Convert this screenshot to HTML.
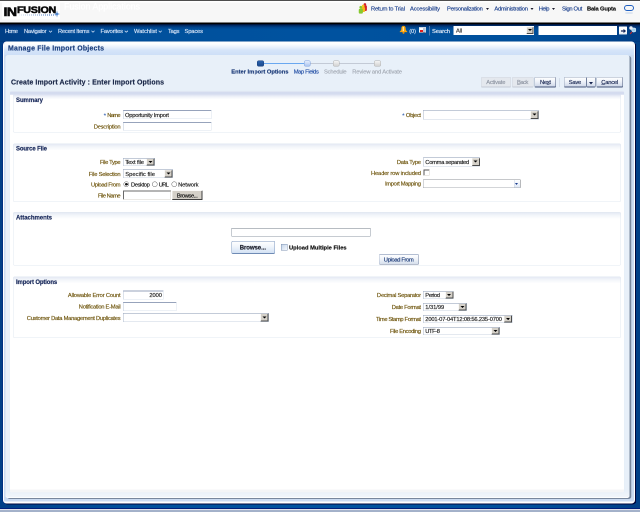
<!DOCTYPE html>
<html><head><meta charset="utf-8"><title>Manage File Import Objects</title>
<style>
html,body{margin:0;padding:0;width:640px;height:512px;overflow:hidden;background:#013e88;}
#root{will-change:transform;position:absolute;left:0;top:0;width:1280px;height:1024px;transform:scale(.5);transform-origin:0 0;background:linear-gradient(90deg,#003f87 0,#003f87 16px,#004893 110px,#00509c 260px,#00529f 640px,#00509c 1040px,#004893 1180px,#003f87 1264px,#003f87 1280px);overflow:hidden;font-family:"Liberation Sans",sans-serif;font-size:11px;color:#1c1c1c;}
#root *{box-sizing:border-box;}
.a{position:absolute;white-space:nowrap;}
.t{position:absolute;white-space:nowrap;line-height:16px;height:16px;-webkit-text-stroke-width:.32px;}
.in{position:absolute;background:#fff;border:1px solid #dbe3ec;border-top:2px solid #97a3bb;border-left-color:#b9c4d6;}
.sel{position:absolute;background:#fff;border:1px solid #c9d3e0;border-top:1px solid #8796b0;border-left-color:#a9b5c9;}
.dd{position:absolute;background:#d4d0c8;border:1px solid #f4f2ee;border-right:2px solid #4a4a4a;border-bottom:2px solid #4a4a4a;}
.dd:after{content:"";position:absolute;left:50%;top:50%;margin:-2px 0 0 -4px;border:4px solid transparent;border-top:4px solid #000;border-bottom:0;}
.btn{position:absolute;border:1px solid #9aa7bd;border-right-color:#46557a;border-bottom:2px solid #46557a;border-radius:2px;background:linear-gradient(#ffffff,#eef2f9 45%,#cfd8e8);}
.btn.dis{border:1px solid #d0d6df;border-bottom:2px solid #c3cad5;background:#e4e8ee;}
.radio{position:absolute;width:11px;height:11px;border-radius:50%;background:#fff;border:1.500px solid #555;}
.sec{position:absolute;border:1px solid #e1e8f0;border-radius:3px;background:linear-gradient(#e4e9f4 0,#f3f6fa 6px,#fff 13px);}
</style></head><body>
<div id="root">
<div class="a" style="left:0.00px;top:0.00px;width:1280.00px;height:2.00px;background:#4d4d4d;"></div>
<div class="a" style="left:0.00px;top:2.00px;width:1280.00px;height:43.60px;background:linear-gradient(#fff 0,#fff 2.500px,#f7f7f7 3px);"></div>
<div class="a" style="left:4.00px;top:4.00px;width:116.00px;height:35.00px;background:#fff;"></div>
<div class="a" style="left:0.00px;top:45.40px;width:1280.00px;height:2.60px;background:#000;"></div>
<div class="a" style="left:0.00px;top:47.80px;width:1280.00px;height:36.20px;background:linear-gradient(rgba(0,5,30,.92) 0,rgba(0,20,70,.6) 3px,rgba(0,30,90,.22) 7px,rgba(0,40,100,0) 11px,rgba(0,40,100,0) 32px,rgba(0,30,100,.25) 36px);"></div>
<div class="a" style="left:6.500px;top:9.500px;font-weight:bold;font-size:24.500px;line-height:28px;color:#0a0a0a;letter-spacing:-1.200px;-webkit-text-stroke:1.100px #0a0a0a;transform:scaleX(1.17);transform-origin:0 0;">IN</div>
<div class="a" style="left:34px;top:8.500px;font-weight:bold;font-size:18px;line-height:22px;color:#0a0a0a;letter-spacing:-.4px;-webkit-text-stroke:1px #0a0a0a;transform:scaleX(1.19);transform-origin:0 0;">FUSION</div>
<div class="a" style="left:38.00px;top:28.80px;width:73.00px;height:2.20px;background:linear-gradient(90deg,rgba(255,255,255,.85),rgba(255,255,255,0) 85%),repeating-linear-gradient(90deg,#2f66b8 0,#2f66b8 2px,transparent 2px,transparent 4px);"></div>
<svg class="a" style="left:108px;top:21px" width="12" height="14" viewBox="0 0 12 14"><path d="M6 0 L7.200 5.800 L12 7 L7.200 8.200 L6 14 L4.800 8.200 L0 7 L4.800 5.800Z" fill="#2f6fc4"/></svg>
<div class="t" style="top:4.54px;font-size:17.5px;color:#ffffff;letter-spacing:0.067px;left:128.00px;">Fusion Applications</div>
<svg class="a" style="left:717px;top:6px" width="18" height="22" viewBox="0 0 18 22">
<circle cx="12.800" cy="2.800" r="2.600" fill="#d4202a"/><rect x="9.500" y="4.500" width="7.300" height="11.500" rx="2.500" fill="#d4202a"/>
<circle cx="9.400" cy="6" r="2.700" fill="#f6c31c"/><rect x="5.800" y="8" width="7.400" height="10" rx="2.500" fill="#f4b81a"/>
<circle cx="4.600" cy="8.600" r="2.800" fill="#86c82e"/><rect x=".5" y="11.500" width="8.300" height="9.800" rx="2.200" fill="#86c82e"/>
</svg>
<div class="t" style="top:8.82px;font-size:11.5px;color:#1b3f8c;letter-spacing:-0.302px;left:742.00px;">Return to Trial</div>
<div class="t" style="top:8.82px;font-size:11.5px;color:#1b3f8c;letter-spacing:-0.219px;left:820.00px;">Accessibility</div>
<div class="t" style="top:8.82px;font-size:11.5px;color:#1b3f8c;letter-spacing:-0.502px;left:894.00px;">Personalization</div>
<div class="t" style="top:8.82px;font-size:11.5px;color:#1b3f8c;letter-spacing:-0.451px;left:988.80px;">Administration</div>
<div class="t" style="top:8.82px;font-size:11.5px;color:#1b3f8c;letter-spacing:-0.817px;left:1077.60px;">Help</div>
<div class="t" style="top:8.82px;font-size:11.5px;color:#1b3f8c;letter-spacing:-0.621px;left:1124.00px;">Sign Out</div>
<div class="t" style="top:8.82px;font-size:11.5px;color:#101010;letter-spacing:-0.301px;font-weight:bold;left:1174.00px;">Bala Gupta</div>
<div class="a" style="left:971.7px;top:16px;border:3.500px solid transparent;border-top:4px solid #1c1c2c;border-bottom:0;"></div>
<div class="a" style="left:1061.1px;top:16px;border:3.500px solid transparent;border-top:4px solid #1c1c2c;border-bottom:0;"></div>
<div class="a" style="left:1103.7px;top:16px;border:3.500px solid transparent;border-top:4px solid #1c1c2c;border-bottom:0;"></div>
<div class="a" style="left:1248.00px;top:10.00px;width:20.00px;height:12.40px;border:2.500px solid #1f5fc0;border-radius:7px;"></div>
<div class="a" style="left:1250.00px;top:24.60px;width:16.00px;height:2.60px;border-radius:50%;background:#bdd0ea;"></div>
<div class="t" style="top:54.22px;font-size:11.5px;color:#d3e2f6;letter-spacing:-1.559px;left:10.00px;">Home</div>
<div class="t" style="top:54.22px;font-size:11.5px;color:#d3e2f6;letter-spacing:-0.527px;left:48.00px;">Navigator</div>
<div class="t" style="top:54.22px;font-size:11.5px;color:#d3e2f6;letter-spacing:-0.432px;left:116.00px;">Recent Items</div>
<div class="t" style="top:54.22px;font-size:11.5px;color:#d3e2f6;letter-spacing:-0.287px;left:201.00px;">Favorites</div>
<div class="t" style="top:54.22px;font-size:11.5px;color:#d3e2f6;letter-spacing:-0.027px;left:268.00px;">Watchlist</div>
<div class="t" style="top:54.22px;font-size:11.5px;color:#d3e2f6;letter-spacing:-0.431px;left:336.00px;">Tags</div>
<div class="t" style="top:54.22px;font-size:11.5px;color:#d3e2f6;letter-spacing:-0.272px;left:369.00px;">Spaces</div>
<svg class="a" style="left:0;top:46px" width="700" height="38"><g fill="none" stroke="#d3e2f6" stroke-width="1.500">
<path d="M98.0 15.500l3 3l3-3"/>
<path d="M183.0 15.500l3 3l3-3"/>
<path d="M249.4 15.500l3 3l3-3"/>
<path d="M317.4 15.500l3 3l3-3"/>
</g></svg>
<svg class="a" style="left:799px;top:51px" width="16" height="18" viewBox="0 0 16 18"><path d="M8 .8c3.200 0 4.300 2.400 4.300 5 0 3.400 1.500 4.800 3.200 6.500v1H.5v-1c1.700-1.700 3.200-3.100 3.200-6.500 0-2.600 1.100-5 4.300-5z" fill="#f9a40a"/><circle cx="8" cy="14.600" r="2.100" fill="#f08c00"/><path d="M7.600 3v8.500" stroke="#ffe9b0" stroke-width="2.400" fill="none"/></svg>
<div class="t" style="top:54.02px;font-size:11.5px;color:#d3e2f6;letter-spacing:-0.228px;left:818.40px;">(0)</div>
<div class="a" style="left:837.60px;top:54.40px;width:14.60px;height:11.80px;background:linear-gradient(90deg,#fff 55%,#b9c6da 56%);border:1px solid #dfe5ee;border-bottom-color:#26324d;border-top:2px solid #c9d3e3;"></div>
<div class="a" style="left:840.00px;top:59.60px;width:6.40px;height:4.00px;background:#e81c1c;"></div>
<div class="a" style="left:858.40px;top:51.60px;width:1.20px;height:19.40px;background:#4f79b2;"></div>
<div class="t" style="top:54.42px;font-size:11.5px;color:#e8f0fb;letter-spacing:-0.088px;left:864.00px;">Search</div>
<div class="a" style="left:906.80px;top:51.80px;width:161.60px;height:18.00px;background:#fff;"></div>
<div class="t" style="top:53.22px;font-size:11.5px;color:#333;letter-spacing:-0.391px;left:912.00px;">All</div>
<div class="dd" style="left:1053.20px;top:53.60px;width:14.00px;height:14.80px;"></div>
<div class="a" style="left:1077.00px;top:51.80px;width:157.00px;height:18.00px;background:#fff;"></div>
<div class="a" style="left:1237.60px;top:53.20px;width:16.40px;height:16.20px;background:linear-gradient(#fff 60%,#dfe5ee);border-radius:1px;"></div>
<svg class="a" style="left:1240.500px;top:55.500px" width="12" height="12" viewBox="0 0 14 14"><path d="M1 5.500h6V2l6 5l-6 5V8.500H1z" fill="#12245a"/></svg>
<svg class="a" style="left:1257px;top:51px" width="18" height="20" viewBox="0 0 18 20"><circle cx="5" cy="5" r="3.500" fill="#e9eef6" stroke="#8fa3c2"/><circle cx="10.500" cy="9" r="4" fill="#9fd0ee" stroke="#dfe9f5" stroke-width="1.500"/><path d="M7 13l-4 4" stroke="#d02020" stroke-width="2"/></svg>
<div class="a" style="left:6.00px;top:83.20px;width:1264.00px;height:923.80px;border-radius:7px;background:#cbdbf1;border:2px solid #fff;box-shadow:2px 2px 0 #00063c,-1px 0 0 #00207a;"></div>
<div class="a" style="left:8.00px;top:1003.00px;width:1260.00px;height:2.20px;border-radius:0 0 6px 6px;background:#fff;"></div>
<div class="a" style="left:8.00px;top:85.20px;width:1260.00px;height:24.80px;border-radius:6px 6px 0 0;background:linear-gradient(#ffffff 0,#fdfeff 12%,#e9f1fc 38%,#d5e4f9 62%,#cddff7 100%);"></div>
<div class="a" style="left:10.60px;top:110.00px;width:1248.00px;height:886.00px;border-radius:5px;background:linear-gradient(#e8f0f9 0,#e8f0f9 870px,#f2f6fb 100%);box-shadow:3.500px 2px .5px #78879d,inset 0 -1.500px 0 rgba(255,255,255,.95);"></div>
<div class="a" style="left:19.60px;top:182.00px;width:1228.40px;height:803.20px;border-radius:4px;background:linear-gradient(#e6ebf6 0,#d2daee 3px,#d6ddf0 7px,#fff 8px);box-shadow:0 0 2px #d8e8f4;"></div>
<div class="a" style="left:19.60px;top:979.20px;width:1228.40px;height:6.00px;border-radius:0 0 4px 4px;background:#f4f5f7;"></div>
<div class="t" style="top:88.35px;font-size:14px;color:#1c3f7e;letter-spacing:0.367px;font-weight:bold;left:16.00px;">Manage File Import Objects</div>
<div class="t" style="top:156.15px;font-size:14px;color:#1a2748;letter-spacing:0.195px;font-weight:bold;left:22.00px;">Create Import Activity : Enter Import Options</div>
<div class="a" style="left:528.00px;top:126.20px;width:80.00px;height:2.00px;background:#6aa8f0;"></div>
<div class="a" style="left:620.00px;top:126.20px;width:130.00px;height:2.00px;background:#c3cad6;"></div>
<div class="a" style="left:514.20px;top:120.80px;width:13.80px;height:12.60px;border-radius:3px;background:linear-gradient(#2a62ad,#1b4a8e);border:1px solid #173e7c;"></div>
<div class="a" style="left:608.00px;top:120.80px;width:13.00px;height:12.60px;border-radius:3px;background:linear-gradient(#e4edfc,#abc5f0);border:1px solid #7fa2de;"></div>
<div class="a" style="left:666.00px;top:120.80px;width:13.20px;height:12.60px;border-radius:3px;background:linear-gradient(#f4f4f4,#d2d2d2);border:1px solid #b0b0b0;"></div>
<div class="a" style="left:748.40px;top:120.80px;width:13.40px;height:12.60px;border-radius:3px;background:linear-gradient(#f4f4f4,#d2d2d2);border:1px solid #b0b0b0;"></div>
<div class="t" style="top:135.22px;font-size:11.5px;color:#1b3a78;letter-spacing:-0.032px;font-weight:bold;left:462.60px;">Enter Import Options</div>
<div class="t" style="top:135.22px;font-size:11.5px;color:#2450a6;letter-spacing:-0.649px;left:587.40px;">Map Fields</div>
<div class="t" style="top:135.22px;font-size:11.5px;color:#a4aab4;letter-spacing:-0.394px;left:648.00px;">Schedule</div>
<div class="t" style="top:135.22px;font-size:11.5px;color:#a4aab4;letter-spacing:-0.220px;left:704.40px;">Review and Activate</div>
<div class="btn dis" style="left:962.00px;top:154.20px;width:59.60px;height:20.80px;"></div>
<div class="t" style="top:156.02px;font-size:11.5px;color:#8f96a3;letter-spacing:-0.358px;left:972.40px;">Activate</div>
<div class="btn dis" style="left:1024.40px;top:154.20px;width:42.80px;height:20.80px;"></div>
<div class="t" style="top:156.02px;font-size:11.5px;color:#8f96a3;letter-spacing:-0.922px;left:1034.00px;"><u>B</u>ack</div>
<div class="btn" style="left:1069.40px;top:154.20px;width:42.40px;height:20.80px;"></div>
<div class="t" style="top:156.02px;font-size:11.5px;color:#15234f;letter-spacing:-0.615px;left:1080.00px;-webkit-text-stroke:.3px #15234f;">Ne<u>x</u>t</div>
<div class="a" style="left:1118.60px;top:156.00px;width:1.20px;height:18.00px;background:#c0cada;"></div>
<div class="btn" style="left:1128.00px;top:154.20px;width:44.60px;height:20.80px;"></div>
<div class="t" style="top:156.02px;font-size:11.5px;color:#15234f;letter-spacing:-0.404px;left:1137.40px;-webkit-text-stroke:.3px #15234f;">Save</div>
<div class="btn" style="left:1172.60px;top:154.20px;width:18.00px;height:20.80px;"></div>
<div class="a" style="left:1177.6px;top:164px;border:4px solid transparent;border-top:5px solid #15234f;border-bottom:0;"></div>
<div class="btn" style="left:1193.40px;top:154.20px;width:52.40px;height:20.80px;"></div>
<div class="t" style="top:156.02px;font-size:11.5px;color:#15234f;letter-spacing:-0.400px;left:1202.60px;-webkit-text-stroke:.3px #15234f;"><u>C</u>ancel</div>
<div class="a" style="left:25.60px;top:188.60px;width:1216.00px;height:76.60px;border:1px solid #e1e8f0;border-top:0;border-radius:0 0 3px 3px;background:linear-gradient(#dce2f1 0,#f1f4fa 5px,#fff 10px);"></div>
<div class="t" style="top:191.64px;font-size:12px;color:#18285a;letter-spacing:-0.115px;font-weight:bold;left:32.00px;">Summary</div>
<div class="t" style="top:222.02px;font-size:11.5px;color:#6f560e;letter-spacing:-1.359px;left:214.60px;">Name</div>
<div class="t" style="top:222.62px;font-size:11.5px;color:#3c68b4;left:207.40px;">*</div>
<div class="in" style="left:246.20px;top:220.40px;width:177.00px;height:17.60px;"></div>
<div class="t" style="top:222.02px;font-size:11.5px;color:#1c1c1c;letter-spacing:-0.426px;left:250.00px;">Opportunity Import</div>
<div class="t" style="top:245.22px;font-size:11.5px;color:#6f560e;letter-spacing:-0.392px;left:187.60px;">Description</div>
<div class="in" style="left:246.20px;top:244.00px;width:177.00px;height:17.20px;"></div>
<div class="t" style="top:222.02px;font-size:11.5px;color:#6f560e;letter-spacing:-0.607px;left:811.80px;">Object</div>
<div class="t" style="top:222.62px;font-size:11.5px;color:#3c68b4;left:804.60px;">*</div>
<div class="sel" style="left:846.20px;top:220.40px;width:231.80px;height:18.20px;"></div>
<div class="dd" style="left:1061.40px;top:221.60px;width:16.00px;height:16.00px;"></div>
<div class="sec" style="left:25.60px;top:286.60px;width:1216.00px;height:117.00px;"></div>
<div class="t" style="top:289.04px;font-size:12px;color:#18285a;letter-spacing:-0.269px;font-weight:bold;left:32.00px;">Source File</div>
<div class="t" style="top:315.82px;font-size:11.5px;color:#6f560e;letter-spacing:-0.656px;left:200.00px;">File Type</div>
<div class="sel" style="left:246.20px;top:316.00px;width:63.60px;height:16.40px;"></div>
<div class="dd" style="left:293.20px;top:317.20px;width:16.00px;height:14.20px;"></div>
<div class="t" style="top:315.82px;font-size:11.5px;color:#1c1c1c;letter-spacing:-0.198px;left:250.60px;">Text file</div>
<div class="t" style="top:340.02px;font-size:11.5px;color:#6f560e;letter-spacing:-0.418px;left:177.60px;">File Selection</div>
<div class="sel" style="left:246.20px;top:338.40px;width:99.40px;height:17.20px;"></div>
<div class="dd" style="left:329.00px;top:339.60px;width:16.00px;height:15.00px;"></div>
<div class="t" style="top:340.02px;font-size:11.5px;color:#1c1c1c;letter-spacing:0.103px;left:250.60px;">Specific file</div>
<div class="t" style="top:361.02px;font-size:11.5px;color:#6f560e;letter-spacing:-0.727px;left:182.00px;">Upload From</div>
<div class="radio" style="left:247.0px;top:363.2px;"></div>
<div class="radio" style="left:303.8px;top:363.2px;"></div>
<div class="radio" style="left:342.6px;top:363.2px;"></div>
<div class="a" style="left:250.0px;top:366.2px;width:5px;height:5px;border-radius:50%;background:#111;"></div>
<div class="t" style="top:361.02px;font-size:11.5px;color:#1c1c1c;letter-spacing:-0.765px;left:262.00px;">Desktop</div>
<div class="t" style="top:361.02px;font-size:11.5px;color:#1c1c1c;letter-spacing:-1.503px;left:317.60px;">URL</div>
<div class="t" style="top:361.02px;font-size:11.5px;color:#1c1c1c;letter-spacing:-0.230px;left:356.20px;">Network</div>
<div class="t" style="top:383.02px;font-size:11.5px;color:#6f560e;letter-spacing:-0.900px;left:196.00px;">File Name</div>
<div class="a" style="left:246.20px;top:381.20px;width:95.40px;height:17.80px;background:#fff;border:1px solid #d4d0c8;border-top:2px solid #6a6a6a;border-left:2px solid #6a6a6a;"></div>
<div class="a" style="left:343.80px;top:381.20px;width:61.40px;height:18.60px;background:#d4d0c8;border:1px solid #f8f7f4;border-right:2px solid #3f3f3f;border-bottom:2px solid #3f3f3f;"></div>
<div class="t" style="top:383.02px;font-size:11.5px;color:#111;letter-spacing:-0.767px;left:353.80px;">Browse...</div>
<div class="t" style="top:316.02px;font-size:11.5px;color:#6f560e;letter-spacing:-0.501px;left:793.80px;">Data Type</div>
<div class="sel" style="left:846.20px;top:315.20px;width:114.00px;height:17.40px;"></div>
<div class="dd" style="left:943.60px;top:316.40px;width:16.00px;height:15.20px;"></div>
<div class="t" style="top:316.02px;font-size:11.5px;color:#1c1c1c;letter-spacing:-0.500px;left:850.60px;">Comma separated</div>
<div class="t" style="top:338.02px;font-size:11.5px;color:#6f560e;letter-spacing:-0.304px;left:742.00px;">Header row included</div>
<div class="a" style="left:847.00px;top:339.40px;width:12.00px;height:12.00px;background:#fff;border:1px solid #d4d0c8;border-top:2px solid #555;border-left:2px solid #555;"></div>
<div class="t" style="top:359.22px;font-size:11.5px;color:#6f560e;letter-spacing:-0.608px;left:770.00px;">Import Mapping</div>
<div class="a" style="left:846.20px;top:358.80px;width:194.80px;height:16.80px;background:#fff;border:1px solid #a6aab0;border-top-color:#8c9096;border-right-color:#6e7278;"></div>
<div class="a" style="left:1027.60px;top:360.00px;width:12.40px;height:14.60px;background:linear-gradient(#fff,#dfe8f5);border-left:1px solid #c9d3e2;"></div>
<div class="a" style="left:1030.3px;top:366.0px;border:3.500px solid transparent;border-top:4px solid #1d3f8f;border-bottom:0;"></div>
<div class="sec" style="left:25.60px;top:424.00px;width:1216.00px;height:107.00px;"></div>
<div class="t" style="top:427.04px;font-size:12px;color:#18285a;letter-spacing:-0.068px;font-weight:bold;left:32.00px;">Attachments</div>
<div class="a" style="left:462.60px;top:455.80px;width:278.80px;height:17.40px;background:#fff;border:1px solid #8d96a3;border-top-color:#6f7884;"></div>
<div class="a" style="left:462.60px;top:482.00px;width:87.00px;height:25.60px;border:1px solid #7d98bf;border-bottom:2px solid #6f8bb5;border-radius:3px;background:linear-gradient(#ffffff,#eff4fb 45%,#d3e1f4);"></div>
<div class="t" style="top:487.04px;font-size:12px;color:#1a1c28;letter-spacing:-0.094px;font-weight:bold;left:479.40px;">Browse...</div>
<div class="a" style="left:562.00px;top:488.00px;width:12.60px;height:13.40px;border:1px solid #7f93b2;background:linear-gradient(135deg,#c5d5ea,#f4f8fd);"></div>
<div class="t" style="top:487.22px;font-size:11.5px;color:#111;letter-spacing:0.010px;font-weight:bold;left:578.00px;">Upload Multiple Files</div>
<div class="a" style="left:758.00px;top:507.60px;width:80.00px;height:21.80px;border:1px solid #b3bed2;border-right-color:#7886a3;border-bottom:1.500px solid #6f7d9b;border-radius:2px;background:linear-gradient(#ffffff,#eff3f9 50%,#d6dfec);"></div>
<div class="t" style="top:510.82px;font-size:11.5px;color:#1b3a78;letter-spacing:-0.647px;left:767.60px;">Upload From</div>
<div class="sec" style="left:25.60px;top:552.60px;width:1216.00px;height:123.80px;"></div>
<div class="t" style="top:555.84px;font-size:12px;color:#18285a;letter-spacing:-0.276px;font-weight:bold;left:32.00px;">Import Options</div>
<div class="t" style="top:582.02px;font-size:11.5px;color:#6f560e;letter-spacing:-0.323px;left:135.80px;">Allowable Error Count</div>
<div class="in" style="left:246.20px;top:581.00px;width:80.80px;height:18.00px;"></div>
<div class="t" style="top:582.02px;font-size:11.5px;color:#1c1c1c;letter-spacing:-0.128px;left:298.80px;">2000</div>
<div class="t" style="top:605.42px;font-size:11.5px;color:#6f560e;letter-spacing:-0.504px;left:157.60px;">Notification E-Mail</div>
<div class="in" style="left:246.20px;top:603.60px;width:107.20px;height:18.00px;"></div>
<div class="t" style="top:628.42px;font-size:11.5px;color:#6f560e;letter-spacing:-0.498px;left:53.60px;">Customer Data Management Duplicates</div>
<div class="sel" style="left:246.20px;top:626.00px;width:291.80px;height:18.20px;"></div>
<div class="dd" style="left:521.40px;top:627.20px;width:16.00px;height:16.00px;"></div>
<div class="t" style="top:582.22px;font-size:11.5px;color:#6f560e;letter-spacing:-0.440px;left:753.80px;">Decimal Separator</div>
<div class="sel" style="left:846.20px;top:582.00px;width:61.20px;height:16.40px;"></div>
<div class="dd" style="left:890.80px;top:583.20px;width:16.00px;height:14.20px;"></div>
<div class="t" style="top:582.22px;font-size:11.5px;color:#1c1c1c;letter-spacing:-0.769px;left:850.60px;">Period</div>
<div class="t" style="top:605.82px;font-size:11.5px;color:#6f560e;letter-spacing:-0.551px;left:783.60px;">Date Format</div>
<div class="sel" style="left:846.20px;top:606.20px;width:87.80px;height:15.80px;"></div>
<div class="dd" style="left:917.40px;top:607.40px;width:16.00px;height:13.60px;"></div>
<div class="t" style="top:605.82px;font-size:11.5px;color:#1c1c1c;letter-spacing:-0.095px;left:850.60px;">1/31/99</div>
<div class="t" style="top:630.42px;font-size:11.5px;color:#6f560e;letter-spacing:-0.699px;left:752.00px;">Time Stamp Format</div>
<div class="sel" style="left:846.20px;top:630.00px;width:178.80px;height:16.00px;"></div>
<div class="dd" style="left:1008.40px;top:631.20px;width:16.00px;height:13.80px;"></div>
<div class="t" style="top:630.42px;font-size:11.5px;color:#1c1c1c;letter-spacing:-0.334px;left:850.60px;">2001-07-04T12:08:56.235-0700</div>
<div class="t" style="top:654.22px;font-size:11.5px;color:#6f560e;letter-spacing:-0.640px;left:780.00px;">File Encoding</div>
<div class="sel" style="left:846.20px;top:654.00px;width:153.80px;height:16.40px;"></div>
<div class="dd" style="left:983.40px;top:655.20px;width:16.00px;height:14.20px;"></div>
<div class="t" style="top:654.22px;font-size:11.5px;color:#1c1c1c;letter-spacing:-0.795px;left:850.60px;">UTF-8</div>
<div class="a" style="left:0.00px;top:1016.40px;width:1280.00px;height:7.60px;background:linear-gradient(#001f7a 0,#001f7a 1.400px,#e6e6ee 1.800px,#e6e6ee 3.400px,#a5b3cb 4px,#a3b1c9 100%);"></div>
</div>
</body></html>
